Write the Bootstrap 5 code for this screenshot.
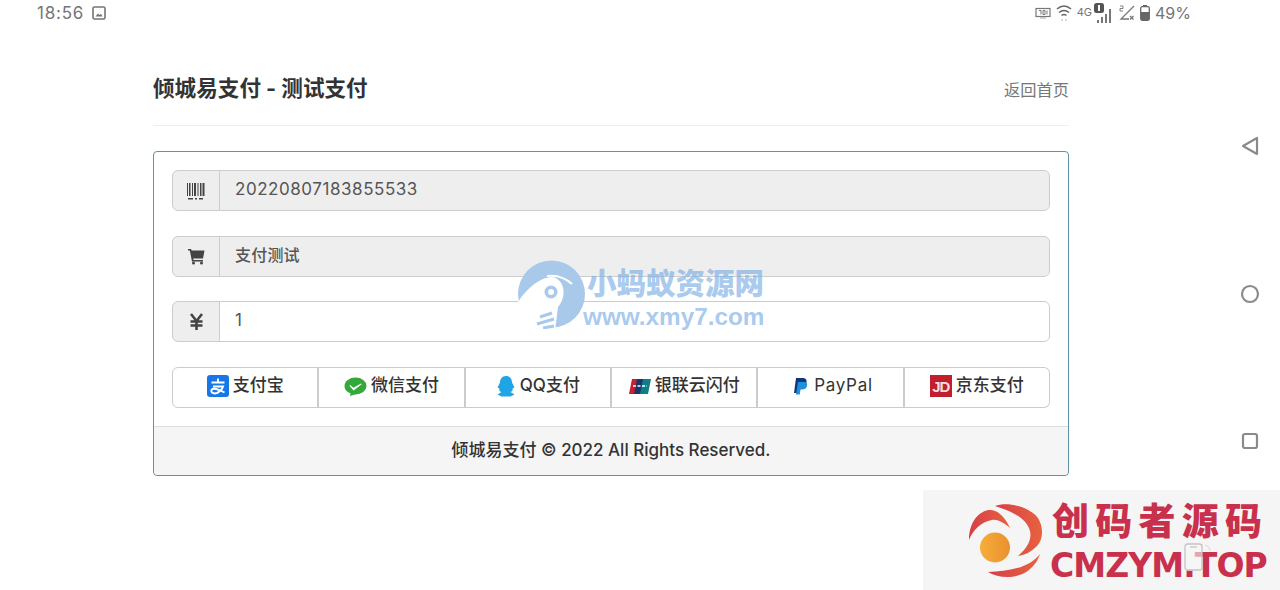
<!DOCTYPE html>
<html lang="zh-CN">
<head>
    <meta charset="UTF-8">
    <meta name="viewport" content="width=device-width, initial-scale=1.0">
    <title>倾城易支付 - 测试支付</title>
    <link href="https://cdn.jsdelivr.net/npm/bootstrap@5.3.0/dist/css/bootstrap.min.css" rel="stylesheet">
    <script src="https://cdn.jsdelivr.net/npm/bootstrap@5.3.0/dist/js/bootstrap.bundle.min.js"></script>
    <style>
        html, body {
            height: 590px;
            overflow: hidden;
        }
        body {
            background-color: #fff;
            font-family: Inter, "Noto Sans CJK SC", sans-serif;
            color: #333;
            position: relative;
        }
        .status-bar {
            height: 26px;
            padding: 0 89px 0 37px;
            color: #757575;
            font-size: 17px;
            line-height: 26px;
        }
        .status-time { letter-spacing: .8px; }
        .status-icons { gap: 5px; font-size: 16px; }
        .status-tiny { font-size: 11px; line-height: 1; margin-right: -3px; padding-bottom: 2px; }
        .pay-main {
            width: 916px;
            margin-left: 153px;
        }
        .pay-header {
            height: 99.5px;
            padding-top: 47px;
            border-bottom: 1px solid #eee;
        }
        .pay-title {
            font-size: 21.6px;
            font-weight: 700;
            line-height: 30px;
            color: #333;
            margin: 0;
        }
        .pay-home {
            font-size: 16.25px;
            line-height: 30px;
            color: #777;
            text-decoration: none;
            padding-top: 2px;
        }
        .pay-card {
            margin-top: 25px;
            height: 325.5px;
            border: 1px solid #5f93ab;
            border-radius: 4px;
        }
        .pay-card .card-body {
            padding: 18.5px 18px 0;
            flex: none;
            height: 274px;
        }
        .pay-group {
            height: 41px;
            margin-bottom: 24.5px;
        }
        .pay-group .input-group-text {
            width: 48px;
            padding: 0;
            justify-content: center;
            background-color: #eee;
            border-color: #ccc;
            border-radius: 6px 0 0 6px;
        }
        .pay-group .form-control {
            height: 41px;
            padding: 0 15px 3px;
            font-size: 17px;
            letter-spacing: .55px;
            color: #555;
            border-color: #ccc;
            border-radius: 0 6px 6px 0;
            box-shadow: none;
        }
        .pay-group .form-control:disabled { background-color: #eee; opacity: 1; }
        .pay-group .pay-small { font-size: 16px; font-weight: 500; letter-spacing: .2px; padding-bottom: 5px; }
        .pay-methods { height: 41px; }
        .pay-methods .btn {
            flex: 1 1 0;
            display: flex;
            align-items: center;
            justify-content: center;
            gap: 4px;
            padding: 0 0 2px;
            font-size: 17px;
            font-weight: 500;
            color: #333;
            background: #fff;
            border: 1px solid #ccc;
            border-radius: 6px;
        }
        .pay-methods .btn + .btn { border-left-width: 2px; margin-left: -1px; }
        .pay-methods svg { flex: none; }
        .pay-latin { letter-spacing: .7px; margin-left: 2px; margin-right: -5px; font-weight: 400; }
        .logo-jd {
            width: 22px;
            height: 22px;
            background: #c01f2e;
            color: #f6dcdc;
            font: 700 15px/24px "Liberation Sans", sans-serif;
            letter-spacing: -1px;
            text-align: center;
        }
        .pay-card .card-footer {
            height: 49px;
            padding: 0;
            line-height: 46px;
            text-align: center;
            font-size: 17px;
            font-weight: 500;
            color: #333;
            background: #f5f5f5;
            border-top: 1px solid #ddd;
        }
        .nav-keys {
            width: 60px;
            padding-top: 110px;
            gap: 128px;
            align-items: center;
        }
        .mark-xmy {
            position: absolute;
            left: 517px;
            top: 259px;
            width: 250px;
            height: 70px;
            pointer-events: none;
        }
        .mark-xmy-name {
            position: absolute;
            left: 70px;
            top: 0;
            font: 900 29.5px/44px "Noto Sans CJK SC", sans-serif;
            color: rgba(120, 172, 228, .65);
            white-space: nowrap;
        }
        .mark-xmy-url {
            position: absolute;
            left: 66px;
            top: 43px;
            font: 700 24.3px/30px "Liberation Sans", sans-serif;
            color: rgba(120, 172, 228, .65);
            white-space: nowrap;
        }
        .mark-cmzym {
            position: absolute;
            left: 923px;
            top: 490px;
            width: 357px;
            height: 100px;
            background: #f5f5f5;
        }
        .mark-cmzym-name {
            position: absolute;
            left: 129px;
            top: 4px;
            font: 900 37px/50px "Noto Sans CJK SC", sans-serif;
            letter-spacing: 6.25px;
            color: #c9304c;
            white-space: nowrap;
        }
        .mark-cmzym-url {
            position: absolute;
            left: 127px;
            top: 58px;
            font: 700 33px/36px "DejaVu Sans", sans-serif;
            letter-spacing: -.9px;
            color: #c9304c;
            white-space: nowrap;
        }
        .mark-phone {
            position: absolute;
            left: 261px;
            top: 53px;
        }
    </style>
</head>
<body>
    <div class="status-bar d-flex align-items-center justify-content-between">
        <div class="d-flex align-items-center gap-2">
            <span class="status-time">18:56</span>
            <svg width="14" height="14" viewBox="0 0 14 14" fill="none"><rect x="1" y="1" width="12" height="12" rx="1.5" stroke="#757575" stroke-width="1.6"/><path d="M3.5 10.5 6 7.5l1.5 1.5 1.5-1.2 1.5 2.7z" fill="#757575"/></svg>
        </div>
        <div class="status-icons d-flex align-items-center">
            <svg width="16" height="12" viewBox="0 0 16 12" fill="none"><rect x="1" y="1.5" width="14" height="8" stroke="#777" stroke-width="1.2"/><path d="M4 3.5h2v4M8 3.5h2v4H8zM12 3.5v4" stroke="#777"/><path d="M5 11h6" stroke="#aaa"/></svg>
            <svg width="16" height="18" viewBox="0 0 16 18" fill="none" stroke="#666" stroke-width="1.6"><path d="M1 5q7-6 14 0M3 8.500q5-4 10 0M5.500 11.500q2.500-2 5 0"/><circle cx="6" cy="16" r="1" fill="#ccc" stroke="none"/><circle cx="10" cy="16" r="1" fill="#ccc" stroke="none"/></svg>
            <span class="status-tiny">4G</span>
            <svg width="20" height="21" viewBox="0 0 20 21" fill="#777"><rect x="0" y="0" width="10" height="10" rx="2.500" fill="#555"/><rect x="4" y="2" width="2" height="6" fill="#fff"/><rect x="3" y="17" width="2" height="3"/><rect x="7" y="14" width="2" height="6"/><rect x="11" y="11" width="2" height="9"/><rect x="15" y="6" width="2" height="14"/></svg>
            <svg width="16" height="18" viewBox="0 0 16 18" fill="none" stroke="#777" stroke-width="1.3"><path d="M15 2 2 15h8"/><path d="M11 12l3.500 3.500m0-3.500-3.500 3.500"/><path d="M1 2h3v2.500H1V7h3" stroke-width=".9"/></svg>
            <svg width="10" height="16" viewBox="0 0 10 16"><rect x="3" y="0" width="4" height="2" fill="#666"/><rect x=".7" y="1.700" width="8.600" height="13.600" rx="1.500" fill="none" stroke="#666" stroke-width="1.300"/><rect x="1" y="7" width="8" height="8" fill="#666"/></svg>
            <span>49%</span>
        </div>
    </div>

    <div class="d-flex justify-content-between">
        <main class="pay-main">
            <div class="pay-header d-flex justify-content-between align-items-start">
                <h1 class="pay-title">倾城易支付 - 测试支付</h1>
                <a href="#" class="pay-home">返回首页</a>
            </div>

            <div class="card pay-card">
                <div class="card-body">
                    <div class="input-group pay-group">
                        <span class="input-group-text">
                            <svg width="18" height="18" viewBox="0 0 18 18" fill="#444"><rect x="0" y="1" width="1" height="13"/><rect x="2" y="1" width="1.500" height="13"/><rect x="5" y="1" width="1" height="13"/><rect x="7" y="1" width="2" height="13"/><rect x="10.500" y="1" width="1" height="13"/><rect x="13" y="1" width="1.500" height="13"/><rect x="15.500" y="1" width="2" height="13"/><rect x="1" y="16" width="5" height="1.500"/><rect x="8" y="16" width="2" height="1.500"/><rect x="12" y="16" width="4" height="1.500"/></svg>
                        </span>
                        <input type="text" class="form-control" value="20220807183855533" disabled>
                    </div>
                    <div class="input-group pay-group">
                        <span class="input-group-text">
                            <svg width="17" height="17" viewBox="0 0 17 17" fill="#444"><path d="M0 1h3l.7 1.500H16.500L15 10.500H5.200l.3 1.500H15v1.500H4L1.800 2.500H0z"/><circle cx="5.500" cy="15" r="1.500"/><circle cx="13.500" cy="15" r="1.500"/></svg>
                        </span>
                        <input type="text" class="form-control pay-small" value="支付测试" disabled>
                    </div>
                    <div class="input-group pay-group">
                        <span class="input-group-text">
                            <svg width="15" height="17" viewBox="0 0 15 17" fill="none" stroke="#444" stroke-width="2.600"><path d="M2 1l5.500 7L13 1M7.500 7v10M1.500 8.500h12M1.500 12.500h12"/></svg>
                        </span>
                        <input type="text" class="form-control" value="1">
                    </div>
                    <div class="btn-group d-flex pay-methods" role="group">
                        <button type="button" class="btn">
                            <svg width="22" height="22" viewBox="0 0 22 22"><rect width="22" height="22" rx="3" fill="#1678e6"/><path d="M4.500 7.500h13M11 3.500v4M6 11.500h10q-1.500 4.500-6 6.500-3 1-5-.5-1.500-2 .5-3.500 3-1.500 12 3.500" fill="none" stroke="#fff" stroke-width="2"/></svg>
                            <span>支付宝</span>
                        </button>
                        <button type="button" class="btn">
                            <svg width="23" height="21" viewBox="0 0 23 21"><ellipse cx="11.500" cy="10" rx="11" ry="8.500" fill="#34a93a"/><path d="M6 20l1-5 5 3z" fill="#34a93a"/><path d="M6 9l3.500 2.800L17 7.500l.6.800-8 6.200L5.500 10z" fill="#fff"/></svg>
                            <span>微信支付</span>
                        </button>
                        <button type="button" class="btn">
                            <svg width="20" height="22" viewBox="0 0 20 22"><path d="M10 1c4 0 6 3 6 6.500l2.500 5-2 1c.8 2-1 3-2 3.500l4 2.500-4 2H5.500l-4-2 4-2.500c-1.500-.5-2.800-1.500-2-3.500l-2-1L4 7.500C4 4 6 1 10 1z" fill="#1fa4e6"/></svg>
                            <span>QQ支付</span>
                        </button>
                        <button type="button" class="btn">
                            <svg width="22" height="15" viewBox="0 0 22 15"><path d="M3 0h6L6 15H0z" fill="#c8202f"/><path d="M8 0h7l-3 15H5z" fill="#17366e"/><path d="M14 0h8l-3 15h-8z" fill="#0d7f86"/><path d="M4 7h14" stroke="#fff" stroke-width="1.500" stroke-dasharray="3 1.500"/></svg>
                            <span>银联云闪付</span>
                        </button>
                        <button type="button" class="btn">
                            <svg width="15" height="18" viewBox="0 0 15 18"><path d="M3 1h6c4 0 5 2 4.500 4.500C13 9 10.500 10 8 10H6l-1 6H1z" fill="#12357f"/><path d="M5 5h7c2 .5 2.500 2 2 4-.6 2.500-2.500 3.500-5 3.500H7.500l-.8 5H3z" fill="#1e8fd8"/></svg>
                            <span class="pay-latin">PayPal</span>
                        </button>
                        <button type="button" class="btn">
                            <span class="logo-jd">JD</span>
                            <span>京东支付</span>
                        </button>
                    </div>
                </div>
                <div class="card-footer">倾城易支付 © 2022 All Rights Reserved.</div>
            </div>
        </main>

        <aside class="nav-keys d-flex flex-column">
            <svg width="18" height="20" viewBox="0 0 18 20" fill="none" stroke="#8a8a8a" stroke-width="2.200" stroke-linejoin="round"><path d="M16 2v16L2 10z"/></svg>
            <svg width="20" height="20" viewBox="0 0 20 20" fill="none" stroke="#8a8a8a" stroke-width="2.200"><circle cx="10" cy="10" r="8"/></svg>
            <svg width="18" height="18" viewBox="0 0 18 18" fill="none" stroke="#8a8a8a" stroke-width="2.200"><rect x="2" y="2" width="14" height="14" rx="2"/></svg>
        </aside>
    </div>

    <div class="mark-xmy">
        <svg width="68" height="70" viewBox="0 0 68 70">
            <circle cx="34.500" cy="35" r="33.500" fill="#a9c9ea"/>
            <path d="M1 43C11 27 26 17 36 18 48 21 50 38 41 48L38 72H0z" fill="#fff"/>
            <path d="M30 17q14-2 25 8" fill="none" stroke="#fff" stroke-width="2"/>
            <circle cx="34" cy="33" r="6.500" fill="#a9c9ea"/>
            <circle cx="34" cy="33" r="3" fill="#fff"/>
            <path d="M23 58l12-4M20 65l17-5M26 69l11-2" stroke="#a9c9ea" stroke-width="3" fill="none"/>
        </svg>
        <div class="mark-xmy-name">小蚂蚁资源网</div>
        <div class="mark-xmy-url">www.xmy7.com</div>
    </div>

    <div class="mark-cmzym">
        <svg class="position-absolute top-0 start-0" width="125" height="100" viewBox="0 0 125 100">
            <defs>
                <linearGradient id="swoosh" x1="0" y1="0" x2="1" y2="0"><stop offset="0" stop-color="#d63f48"/><stop offset="1" stop-color="#e8623f"/></linearGradient>
                <linearGradient id="sun" x1="0" y1="0" x2="1" y2="0"><stop offset="0" stop-color="#f6ae38"/><stop offset="1" stop-color="#ea9030"/></linearGradient>
            </defs>
            <circle cx="72" cy="57.500" r="15" fill="url(#sun)"/>
            <path d="M46 50C46 30 58 20 67 20 75 20 82 27 87 38 80 32 74 29 69 30 58 32 50 40 46 50z" fill="url(#swoosh)"/>
            <path d="M72 16C86 11 108 18 115 28 121 38 120 50 114 56 108 62 102 65 95 66 104 58 109 50 107 41 104 28 88 21 72 16z" fill="url(#swoosh)"/>
            <path d="M65 82C78 90 96 88 106 80 112 75 115 70 117 64 112 70 106 74 98 77 88 80 76 82 65 82z" fill="url(#swoosh)"/>
        </svg>
        <div class="mark-cmzym-name">创码者源码</div>
        <div class="mark-cmzym-url">CMZYM.TOP</div>
        <svg class="mark-phone" width="30" height="32" viewBox="0 0 30 32" fill="none" stroke="#c4c4c4" stroke-width="1.300"><rect x="1" y="1" width="17" height="26" rx="2.500" fill="#f7f7f7" fill-opacity=".6"/><path d="M6 4h7"/><path d="M21 2q5 2 5 6" stroke="#ddd"/></svg>
    </div>
</body>
</html>
